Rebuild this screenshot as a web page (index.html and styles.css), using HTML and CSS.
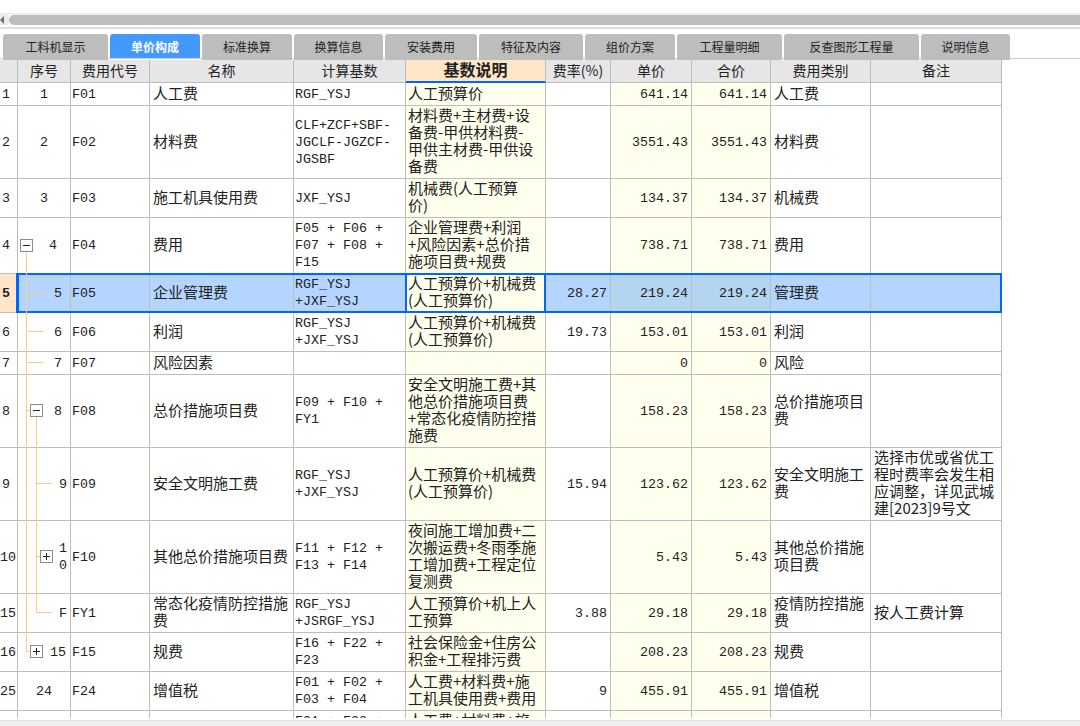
FILE: index.html
```html
<!DOCTYPE html>
<html lang="zh-CN">
<head>
<meta charset="utf-8">
<title>单价构成</title>
<link rel="stylesheet" href="styles.css">
</head>
<body>
<div class="scrollbar">
  <div class="scroll-btn"><span class="arrow"></span></div>
  <div class="scroll-thumb"></div>
</div>
<nav class="tabs">
  <div class="tab">工料机显示</div>
  <div class="tab active">单价构成</div>
  <div class="tab">标准换算</div>
  <div class="tab">换算信息</div>
  <div class="tab">安装费用</div>
  <div class="tab">特征及内容</div>
  <div class="tab">组价方案</div>
  <div class="tab">工程量明细</div>
  <div class="tab">反查图形工程量</div>
  <div class="tab">说明信息</div>
</nav>
<main class="grid-wrap">
  <table class="grid">
    <colgroup>
      <col class="c0"><col class="c1"><col class="c2"><col class="c3"><col class="c4"><col class="c5"><col class="c6"><col class="c7"><col class="c8"><col class="c9"><col class="c10">
    </colgroup>
    <thead>
      <tr class="h23">
        <th></th><th>序号</th><th>费用代号</th><th>名称</th><th>计算基数</th><th class="th-active">基数说明</th><th>费率(%)</th><th>单价</th><th>合价</th><th>费用类别</th><th>备注</th>
      </tr>
    </thead>
    <tbody>
      <tr class="h23">
        <td class="idx">1</td><td class="seq">1</td><td class="code">F01</td><td class="name">人工费</td><td class="base">RGF_YSJ</td><td class="desc">人工预算价</td><td class="num"></td><td class="num yel">641.14</td><td class="num yel">641.14</td><td class="name">人工费</td><td class="name"></td>
      </tr>
      <tr class="h73">
        <td class="idx">2</td><td class="seq">2</td><td class="code">F02</td><td class="name">材料费</td><td class="base">CLF+ZCF+SBF-<br>JGCLF-JGZCF-<br>JGSBF</td><td class="desc">材料费+主材费+设<br>备费-甲供材料费-<br>甲供主材费-甲供设<br>备费</td><td class="num"></td><td class="num yel">3551.43</td><td class="num yel">3551.43</td><td class="name">材料费</td><td class="name"></td>
      </tr>
      <tr class="h39">
        <td class="idx">3</td><td class="seq">3</td><td class="code">F03</td><td class="name">施工机具使用费</td><td class="base">JXF_YSJ</td><td class="desc">机械费(人工预算<br>价)</td><td class="num"></td><td class="num yel">134.37</td><td class="num yel">134.37</td><td class="name">机械费</td><td class="name"></td>
      </tr>
      <tr class="h56">
        <td class="idx">4</td><td class="seq lv0">4</td><td class="code">F04</td><td class="name">费用</td><td class="base">F05 + F06 +<br>F07 + F08 +<br>F15</td><td class="desc">企业管理费+利润<br>+风险因素+总价措<br>施项目费+规费</td><td class="num"></td><td class="num yel">738.71</td><td class="num yel">738.71</td><td class="name">费用</td><td class="name"></td>
      </tr>
      <tr class="h39 selected">
        <td class="idx idx-active">5</td><td class="seq lv1">5</td><td class="code">F05</td><td class="name">企业管理费</td><td class="base">RGF_YSJ<br>+JXF_YSJ</td><td class="desc">人工预算价+机械费<br>(人工预算价)</td><td class="num">28.27</td><td class="num yel">219.24</td><td class="num yel">219.24</td><td class="name">管理费</td><td class="name"></td>
      </tr>
      <tr class="h39">
        <td class="idx">6</td><td class="seq lv1">6</td><td class="code">F06</td><td class="name">利润</td><td class="base">RGF_YSJ<br>+JXF_YSJ</td><td class="desc">人工预算价+机械费<br>(人工预算价)</td><td class="num">19.73</td><td class="num yel">153.01</td><td class="num yel">153.01</td><td class="name">利润</td><td class="name"></td>
      </tr>
      <tr class="h23">
        <td class="idx">7</td><td class="seq lv1">7</td><td class="code">F07</td><td class="name">风险因素</td><td class="base"></td><td class="desc"></td><td class="num"></td><td class="num yel">0</td><td class="num yel">0</td><td class="name">风险</td><td class="name"></td>
      </tr>
      <tr class="h73">
        <td class="idx">8</td><td class="seq lv1">8</td><td class="code">F08</td><td class="name">总价措施项目费</td><td class="base">F09 + F10 +<br>FY1</td><td class="desc">安全文明施工费+其<br>他总价措施项目费<br>+常态化疫情防控措<br>施费</td><td class="num"></td><td class="num yel">158.23</td><td class="num yel">158.23</td><td class="name">总价措施项目费</td><td class="name"></td>
      </tr>
      <tr class="h73">
        <td class="idx">9</td><td class="seq lv2">9</td><td class="code">F09</td><td class="name">安全文明施工费</td><td class="base">RGF_YSJ<br>+JXF_YSJ</td><td class="desc">人工预算价+机械费<br>(人工预算价)</td><td class="num">15.94</td><td class="num yel">123.62</td><td class="num yel">123.62</td><td class="name">安全文明施工费</td><td class="name">选择市优或省优工程时费率会发生相应调整，详见武城建[2023]9号文</td>
      </tr>
      <tr class="h73">
        <td class="idx">10</td><td class="seq lv2">1<br>0</td><td class="code">F10</td><td class="name">其他总价措施项目费</td><td class="base">F11 + F12 +<br>F13 + F14</td><td class="desc">夜间施工增加费+二<br>次搬运费+冬雨季施<br>工增加费+工程定位<br>复测费</td><td class="num"></td><td class="num yel">5.43</td><td class="num yel">5.43</td><td class="name">其他总价措施项目费</td><td class="name"></td>
      </tr>
      <tr class="h39">
        <td class="idx">15</td><td class="seq lv2">F</td><td class="code">FY1</td><td class="name">常态化疫情防控措施费</td><td class="base">RGF_YSJ<br>+JSRGF_YSJ</td><td class="desc">人工预算价+机上人<br>工预算</td><td class="num">3.88</td><td class="num yel">29.18</td><td class="num yel">29.18</td><td class="name">疫情防控措施费</td><td class="name">按人工费计算</td>
      </tr>
      <tr class="h39">
        <td class="idx">16</td><td class="seq lv2b">15</td><td class="code">F15</td><td class="name">规费</td><td class="base">F16 + F22 +<br>F23</td><td class="desc">社会保险金+住房公<br>积金+工程排污费</td><td class="num"></td><td class="num yel">208.23</td><td class="num yel">208.23</td><td class="name">规费</td><td class="name"></td>
      </tr>
      <tr class="h39">
        <td class="idx">25</td><td class="seq">24</td><td class="code">F24</td><td class="name">增值税</td><td class="base">F01 + F02 +<br>F03 + F04</td><td class="desc">人工费+材料费+施<br>工机具使用费+费用</td><td class="num">9</td><td class="num yel">455.91</td><td class="num yel">455.91</td><td class="name">增值税</td><td class="name"></td>
      </tr>
      <tr class="h39">
        <td class="idx"></td><td class="seq"></td><td class="code"></td><td class="name"></td><td class="base">F01 + F02 +<br>F03</td><td class="desc">人工费+材料费+旅<br>游</td><td class="num"></td><td class="num yel"></td><td class="num yel"></td><td class="name"></td><td class="name"></td>
      </tr>
    </tbody>
  </table>

  <div class="sel-row"></div>
  <div class="sel-cell"></div>

  <svg class="tree" width="80" height="600" viewBox="0 60 80 600" aria-hidden="true">
    <g class="tree-line">
      <path d="M26.5 252V651.5H30"/>
      <path d="M26 292.5H43M26 331.5H43M26 362.5H43M26 410.5H30"/>
      <path d="M36.5 417V612.5H53"/>
      <path d="M36 483.5H53M36 556.5H40"/>
    </g>
    <g class="tree-box">
      <rect x="20.5" y="239.5" width="12" height="12"/><path d="M23 245.5H30"/>
      <rect x="30.5" y="404.5" width="12" height="12"/><path d="M33 410.5H40"/>
      <rect x="40.5" y="550.5" width="12" height="12"/><path d="M43 556.5H50M46.5 553V560"/>
      <rect x="30.5" y="645.5" width="12" height="12"/><path d="M33 651.5H40M36.5 648V655"/>
    </g>
  </svg>
</main>
<div class="bottom-bar"></div>
</body>
</html>
```
FILE: styles.css
```css
* { box-sizing: border-box; }

html, body {
  margin: 0;
  height: 726px;
  overflow: hidden;
  background: #fff;
}

body {
  display: flex;
  flex-direction: column;
  font-family: "Noto Sans CJK SC", "Liberation Sans", sans-serif;
  color: #222;
}

/* top scrollbar */
.scrollbar {
  display: flex;
  flex: none;
  height: 16px;
  margin-top: 13px;
  border-top: 2px solid #ececec;
  border-bottom: 2px solid #dedede;
  background: #fff;
}

.scroll-btn {
  flex: none;
  width: 9px;
  height: 10px;
  display: flex;
  align-items: center;
  background: #ececec;
}

.arrow {
  width: 0;
  height: 0;
  border-top: 4px solid transparent;
  border-bottom: 4px solid transparent;
  border-right: 4px solid #6e6e6e;
}

.scroll-thumb {
  flex: 1;
  height: 10px;
  background: #bdbdbd;
  border-radius: 5px 0 0 5px;
}

/* tabs */
.tabs {
  flex: none;
  display: grid;
  grid-template-columns: 105px 90px 90px 89px 92px 104px 90px 105px 135px 89px 1fr;
  column-gap: 2px;
  height: 26px;
  margin-top: 5px;
  padding-left: 3px;
  background: linear-gradient(#fff 24px, #cfcfcf 24px, #cfcfcf 25px, #fff 25px);
}

.tab {
  height: 26px;
  padding-bottom: 1px;
  display: flex;
  align-items: center;
  justify-content: center;
  font-size: 12px;
  background: #bdbdbd;
  border-radius: 3px 3px 0 0;
  color: #222;
}

.tab.active {
  height: 24px;
  padding-bottom: 0;
  background: #4499ff;
  color: #fff;
  font-weight: 700;
}

/* table */
.grid-wrap {
  position: relative;
  flex: none;
  height: 658px;
  overflow: hidden;
}

.grid {
  table-layout: fixed;
  width: 1002px;
  border-collapse: separate;
  border-spacing: 0;
  font-size: 15px;
  line-height: 17px;
}

.c0 { width: 18px; }
.c1 { width: 53px; }
.c2 { width: 79px; }
.c3 { width: 144px; }
.c4 { width: 112px; }
.c5 { width: 140px; }
.c6 { width: 65px; }
.c7 { width: 81px; }
.c8 { width: 79px; }
.c9 { width: 100px; }
.c10 { width: 131px; }

.h23 { height: 23px; }
.h39 { height: 39px; }
.h56 { height: 56px; }
.h73 { height: 73px; }

th, td {
  padding: 0 3px;
  border-right: 1px solid #bdbdbd;
  border-bottom: 1px solid #bdbdbd;
  vertical-align: middle;
}

th {
  padding-bottom: 2px;
  background: #e6e6e6;
  font-weight: 400;
  font-size: 14px;
  text-align: center;
  white-space: nowrap;
}

.th-active {
  background: #ffe6c8;
  border-bottom: 2px solid #0066ff;
  font-size: 16px;
  font-weight: 700;
  padding-bottom: 3px;
}

.name {
  padding-bottom: 4px;
}

.idx {
  padding: 0 5px 0 0;
  font: 13.33px/17px "Liberation Mono", monospace;
  text-align: center;
  white-space: nowrap;
}

.idx-active {
  background: #ffe6c8;
  font-weight: 700;
}

.seq {
  padding: 0;
  font: 13.33px/17px "Liberation Mono", monospace;
  text-align: center;
}

.seq.lv0 { text-align: right; padding-right: 13px; }
.seq.lv1 { text-align: right; padding-right: 8px; }
.seq.lv2 { text-align: right; padding-right: 3px; }
.seq.lv2b { text-align: right; padding-right: 4px; }

.code {
  padding: 0 1px;
  font: 13.33px/17px "Liberation Mono", monospace;
}

.base {
  padding: 0 1px;
  font: 13.33px/17px "Liberation Mono", monospace;
  white-space: nowrap;
}

.desc {
  padding: 0 2px 4px;
  background: #ffffee;
  white-space: nowrap;
}

.num {
  font: 13.33px/17px "Liberation Mono", monospace;
  text-align: right;
}

.num.yel { background: #ffffee; }

.selected td { background: #b3d5ff; }
.selected td.idx-active { background: #ffe6c8; }
.selected td.desc { background: #ffffee; }
.selected td.yel { background: #b3d5f0; }

/* selection frames */
.sel-row {
  position: absolute;
  top: 213px;
  left: 16px;
  width: 986px;
  height: 40px;
  border: 2px solid #0066ff;
  border-left-width: 3px;
  pointer-events: none;
}

.sel-cell {
  position: absolute;
  top: 213px;
  left: 405px;
  width: 141px;
  height: 40px;
  border: 2px solid #0066ff;
  pointer-events: none;
}

/* tree lines */
.tree {
  position: absolute;
  top: 0;
  left: 0;
  pointer-events: none;
}

.tree-line path {
  fill: none;
  stroke: #ffcc80;
  stroke-width: 1;
}

.tree-box rect {
  fill: #fff;
  stroke: #8c8c8c;
  stroke-width: 1;
}

.tree-box path {
  fill: none;
  stroke: #222;
  stroke-width: 1;
}

.bottom-bar {
  flex: none;
  height: 6px;
  margin-top: 2px;
  background: #f0f0f0;
  border-top: 1px solid #e4e4e4;
}
```
